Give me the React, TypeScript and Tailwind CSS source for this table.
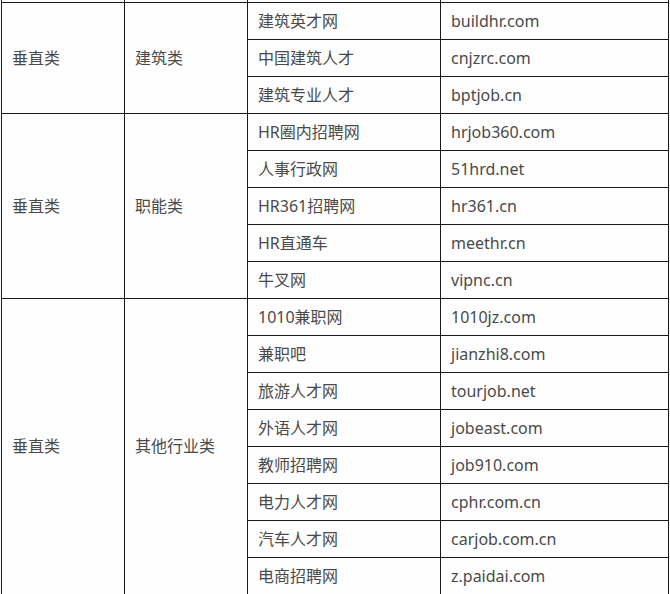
type Group = { kind: string; cat: string; sites: [string, string][] };

const groups: Group[] = [
  {
    kind: '垂直类',
    cat: '建筑类',
    sites: [
      ['建筑英才网', 'buildhr.com'],
      ['中国建筑人才', 'cnjzrc.com'],
      ['建筑专业人才', 'bptjob.cn'],
    ],
  },
  {
    kind: '垂直类',
    cat: '职能类',
    sites: [
      ['HR圈内招聘网', 'hrjob360.com'],
      ['人事行政网', '51hrd.net'],
      ['HR361招聘网', 'hr361.cn'],
      ['HR直通车', 'meethr.cn'],
      ['牛叉网', 'vipnc.cn'],
    ],
  },
  {
    kind: '垂直类',
    cat: '其他行业类',
    sites: [
      ['1010兼职网', '1010jz.com'],
      ['兼职吧', 'jianzhi8.com'],
      ['旅游人才网', 'tourjob.net'],
      ['外语人才网', 'jobeast.com'],
      ['教师招聘网', 'job910.com'],
      ['电力人才网', 'cphr.com.cn'],
      ['汽车人才网', 'carjob.com.cn'],
      ['电商招聘网', 'z.paidai.com'],
    ],
  },
];

const cell = 'border border-[#1a1a1a] px-[10px] py-0 text-left align-middle';

export default function App() {
  return (
    <div className="h-[594px] w-[670px] overflow-hidden bg-[#fefefe] pl-[1px]">
      <table
        className="w-[667px] table-fixed border-collapse text-[16px] text-[#4a4a4a]"
        style={{ fontFamily: '"Noto Sans", "Noto Sans CJK SC", sans-serif' }}
      >
        <colgroup>
          <col className="w-[123px]" />
          <col className="w-[123px]" />
          <col className="w-[193px]" />
          <col className="w-[228px]" />
        </colgroup>
        <tbody>
          <tr className="h-[2px]">
            <td className="border-x border-b border-[#1a1a1a] p-0" />
            <td className="border-x border-b border-[#1a1a1a] p-0" />
            <td className="border-x border-b border-[#1a1a1a] p-0" />
            <td className="border-x border-b border-[#1a1a1a] p-0" />
          </tr>
          {groups.map((g) =>
            g.sites.map(([name, url], i) => (
              <tr key={g.cat + name} className="h-[37px]">
                {i === 0 && (
                  <>
                    <td rowSpan={g.sites.length} className={cell}>{g.kind}</td>
                    <td rowSpan={g.sites.length} className={cell}>{g.cat}</td>
                  </>
                )}
                <td className={cell}>{name}</td>
                <td className={cell}>{url}</td>
              </tr>
            )),
          )}
        </tbody>
      </table>
    </div>
  );
}
